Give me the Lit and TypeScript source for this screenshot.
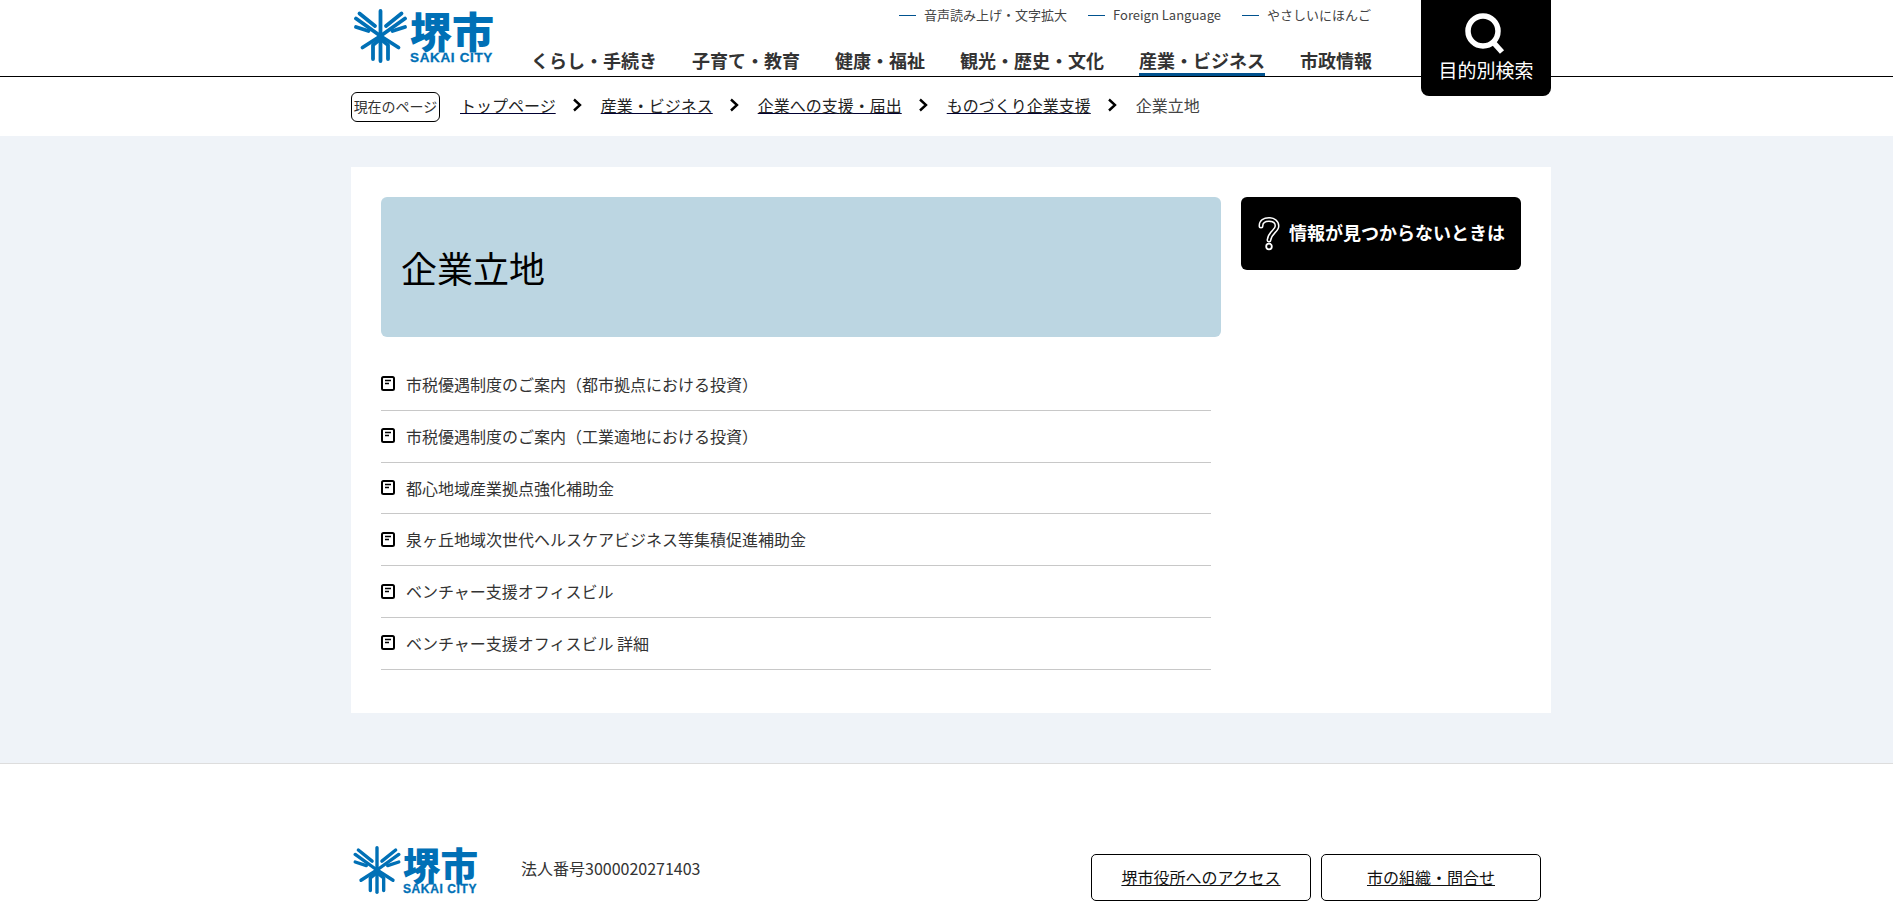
import { LitElement, html, css, svg } from 'lit';
import { customElement } from 'lit/decorators.js';

const NAV = [
  { label: 'くらし・手続き' },
  { label: '子育て・教育' },
  { label: '健康・福祉' },
  { label: '観光・歴史・文化' },
  { label: '産業・ビジネス', active: true },
  { label: '市政情報' },
];
const TOP_LINKS = ['音声読み上げ・文字拡大', 'Foreign Language', 'やさしいにほんご'];
const CRUMBS = ['トップページ', '産業・ビジネス', '企業への支援・届出', 'ものづくり企業支援'];
const PAGES = [
  '市税優遇制度のご案内（都市拠点における投資）',
  '市税優遇制度のご案内（工業適地における投資）',
  '都心地域産業拠点強化補助金',
  '泉ヶ丘地域次世代ヘルスケアビジネス等集積促進補助金',
  'ベンチャー支援オフィスビル',
  'ベンチャー支援オフィスビル 詳細',
];

// city emblem, symmetric around x=26.5
const emblem = svg`
  <g fill="none" stroke="currentColor" stroke-width="3.800" stroke-linecap="round" stroke-linejoin="round">
    <path d="M26.500 2V52" />
    <path d="M5.500 4.500L21 17" />
    <path d="M47.500 4.500L32 17" />
    <path d="M2 9.500L26.500 27L51 9.500" />
    <path d="M2 18L14.500 22" />
    <path d="M51 18L38.500 22" />
    <path d="M8.500 38.500L26.500 27L44.500 38.500" />
    <path d="M19 50V36L26.500 30L34 36V50" />
  </g>
`;

@customElement('app-root')
export class AppRoot extends LitElement {
  static styles = css`
    :host {
      display: block;
      height: 906px;
      overflow: hidden;
      background: #fff;
      color: #333;
      font-family: 'Noto Sans CJK JP', 'Noto Sans', sans-serif;
      font-size: 16px;
    }

    a {
      color: inherit;
    }

    .wrap {
      width: 1200px;
      margin-left: 351px;
    }

    /* header */
    .header {
      border-bottom: 1px solid #000;
      height: 76px;
    }

    .header-inner {
      position: relative;
      display: flex;
      height: 76px;
    }

    .logo {
      display: flex;
      color: #0070b6;
      font-size: 42px;
      width: 142px;
      padding: 9px 0 0 3px;
      box-sizing: border-box;
      gap: 3px;
    }

    .logo svg {
      width: 53px;
      height: 54px;
      flex: none;
    }

    .logo-name {
      display: flex;
      flex-direction: column;
    }

    .logo-kanji {
      font-weight: 900;
      line-height: 42px;
      height: 43px;
      white-space: nowrap;
    }

    .logo-city {
      font-family: 'Liberation Sans', sans-serif;
      font-weight: 700;
      font-size: 13.5px;
      line-height: 11px;
      letter-spacing: 0.65px;
      white-space: nowrap;
      -webkit-text-stroke: 0.3px currentColor;
    }

    .logo.small {
      font-size: 37.5px;
      width: 127px;
      padding: 0 0 0 2px;
      gap: 2px;
    }

    .logo.small svg {
      width: 48px;
      height: 48px;
    }

    .logo.small .logo-kanji {
      line-height: 36px;
      height: 39px;
    }

    .logo.small .logo-city {
      font-size: 12px;
      line-height: 9px;
      letter-spacing: 0.6px;
    }

    .head-right {
      width: 879px;
      display: flex;
      flex-direction: column;
      align-items: flex-end;
    }

    .top-links {
      display: flex;
      align-items: flex-start;
      gap: 21px;
      font-size: 13px;
      line-height: 30px;
      height: 43px;
      color: #444;
      margin-right: 1px;
    }

    .top-links span {
      display: flex;
      align-items: center;
      gap: 8px;
    }

    .top-links i {
      display: block;
      width: 17px;
      height: 1px;
      background: #00528f;
    }

    .nav {
      display: flex;
      gap: 35px;
    }

    .nav-item {
      font-size: 18px;
      font-weight: 700;
      line-height: 35px;
      height: 33px;
      box-sizing: border-box;
      white-space: nowrap;
    }

    .nav-item.active {
      border-bottom: 3px solid #00528f;
    }

    .search {
      position: absolute;
      top: 0;
      right: 0;
      width: 130px;
      height: 96px;
      background: #000;
      color: #fff;
      border-radius: 0 0 8px 8px;
      text-align: center;
      font-size: 19px;
      line-height: 26px;
    }

    .search svg {
      display: block;
      width: 44px;
      height: 42px;
      margin: 13px auto 2px;
      transform: translateX(-2px);
    }

    /* breadcrumb */
    .crumbs {
      display: flex;
      align-items: center;
      height: 59px;
    }

    .here {
      width: 89px;
      height: 30px;
      box-sizing: border-box;
      border: 1px solid #000;
      border-radius: 6px;
      font-size: 14px;
      line-height: 26px;
      text-align: center;
      white-space: nowrap;
      margin-right: 20px;
      color: #333;
    }

    .crumbs a {
      color: #222;
      text-decoration-color: #000033;
      line-height: 24px;
      margin-top: -3px;
    }

    .crumbs svg {
      width: 10px;
      height: 14px;
      margin: -3px 17.500px 0;
      flex: none;
      transform: translateX(-1px);
    }

    .crumbs .current {
      color: #444;
      margin-top: -3px;
    }

    /* main */
    .main {
      background: #eff3f8;
      padding: 31px 0 50px;
    }

    .card {
      background: #fff;
      padding: 30px;
      height: 546px;
      box-sizing: border-box;
      display: flex;
      gap: 20px;
    }

    .content {
      width: 840px;
    }

    .title {
      background: #bcd6e2;
      border-radius: 6px;
      height: 140px;
      box-sizing: border-box;
      padding-left: 20px;
      display: flex;
      align-items: center;
      margin: 0 0 22px;
      font-size: 36px;
      font-weight: 400;
      color: #000;
    }

    .pages {
      list-style: none;
      margin: 0;
      padding: 0;
      width: 830px;
    }

    .pages li {
      display: flex;
      align-items: center;
      gap: 11px;
      padding: 13px 0;
      line-height: 24.800px;
      border-bottom: 1px solid #c8c8c8;
      color: #333;
    }

    .pages svg {
      width: 14px;
      height: 15px;
      flex: none;
      margin-top: -1px;
    }

    .help {
      width: 280px;
      height: 73px;
      background: #000;
      color: #fff;
      border-radius: 6px;
      display: flex;
      align-items: center;
      padding-left: 17px;
      box-sizing: border-box;
      gap: 9px;
      font-size: 18px;
      font-weight: 700;
      white-space: nowrap;
    }

    .help span {
      margin-top: -3px;
    }

    .help svg {
      width: 22px;
      height: 34px;
      flex: none;
    }

    /* footer */
    .footer {
      border-top: 1px solid #ddd;
      padding-top: 82px;
    }

    .footer-inner {
      display: flex;
    }

    .corp {
      margin: 10px 0 0 43px;
      line-height: 24px;
      width: 412px;
      white-space: nowrap;
    }

    .buttons {
      display: flex;
      gap: 10px;
      margin: 8px 0 0 158px;
    }

    .buttons a {
      display: block;
      width: 220px;
      height: 47px;
      box-sizing: border-box;
      border: 1px solid #000;
      border-radius: 5px;
      line-height: 45px;
      text-align: center;
      color: #111;
    }
  `;

  logo(small = false) {
    return html`
      <div class="logo ${small ? 'small' : ''}">
        <svg viewBox="0 0 53 54">${emblem}</svg>
        <div class="logo-name">
          <div class="logo-kanji">堺市</div>
          <div class="logo-city">SAKAI CITY</div>
        </div>
      </div>
    `;
  }

  render() {
    return html`
      <header class="header">
        <div class="wrap header-inner">
          ${this.logo()}
          <div class="head-right">
            <div class="top-links">
              ${TOP_LINKS.map(t => html`<span><i></i>${t}</span>`)}
            </div>
            <nav class="nav">
              ${NAV.map(n => html`<div class="nav-item ${n.active ? 'active' : ''}">${n.label}</div>`)}
            </nav>
          </div>
          <div class="search">
            <svg viewBox="0 0 44 42">
              <circle cx="21" cy="18" r="15" fill="none" stroke="#fff" stroke-width="5.500" />
              <path d="M31 29L40 39" stroke="#fff" stroke-width="5.500" fill="none" />
            </svg>
            目的別検索
          </div>
        </div>
      </header>

      <div class="wrap crumbs">
        <div class="here">現在のページ</div>
        ${CRUMBS.map(
          c => html`
            <a href="#">${c}</a>
            <svg viewBox="0 0 10 14">
              <path d="M2 1.500L8 7L2 12.500" fill="none" stroke="#000" stroke-width="2.400" />
            </svg>
          `,
        )}
        <span class="current">企業立地</span>
      </div>

      <main class="main">
        <div class="wrap card">
          <div class="content">
            <h1 class="title">企業立地</h1>
            <ul class="pages">
              ${PAGES.map(
                p => html`
                  <li>
                    <svg viewBox="0 0 14 15">
                      <rect x="1" y="1" width="12" height="13" rx="1.500" fill="none" stroke="#000" stroke-width="2" />
                      <path d="M4 4.500H10M4 7.500H8" stroke="#000" stroke-width="1.500" />
                    </svg>
                    ${p}
                  </li>
                `,
              )}
            </ul>
          </div>
          <div class="help">
            <svg viewBox="0 0 22 34">
              <g fill="none" stroke-linecap="round" stroke-linejoin="round">
                <path d="M3 9C3 4.500 6.500 2.500 11 2.500C15.500 2.500 19 5 19 9C19 14 12 15 11 23" stroke="#fff" stroke-width="5" />
                <path d="M3 9C3 4.500 6.500 2.500 11 2.500C15.500 2.500 19 5 19 9C19 14 12 15 11 23" stroke="#000" stroke-width="2" />
              </g>
              <circle cx="11" cy="29.500" r="2.800" fill="none" stroke="#fff" stroke-width="1.800" />
            </svg>
            <span>情報が見つからないときは</span>
          </div>
        </div>
      </main>

      <footer class="footer">
        <div class="wrap footer-inner">
          ${this.logo(true)}
          <div class="corp">法人番号3000020271403</div>
          <div class="buttons">
            <a href="#">堺市役所へのアクセス</a>
            <a href="#">市の組織・問合せ</a>
          </div>
        </div>
      </footer>
    `;
  }
}
